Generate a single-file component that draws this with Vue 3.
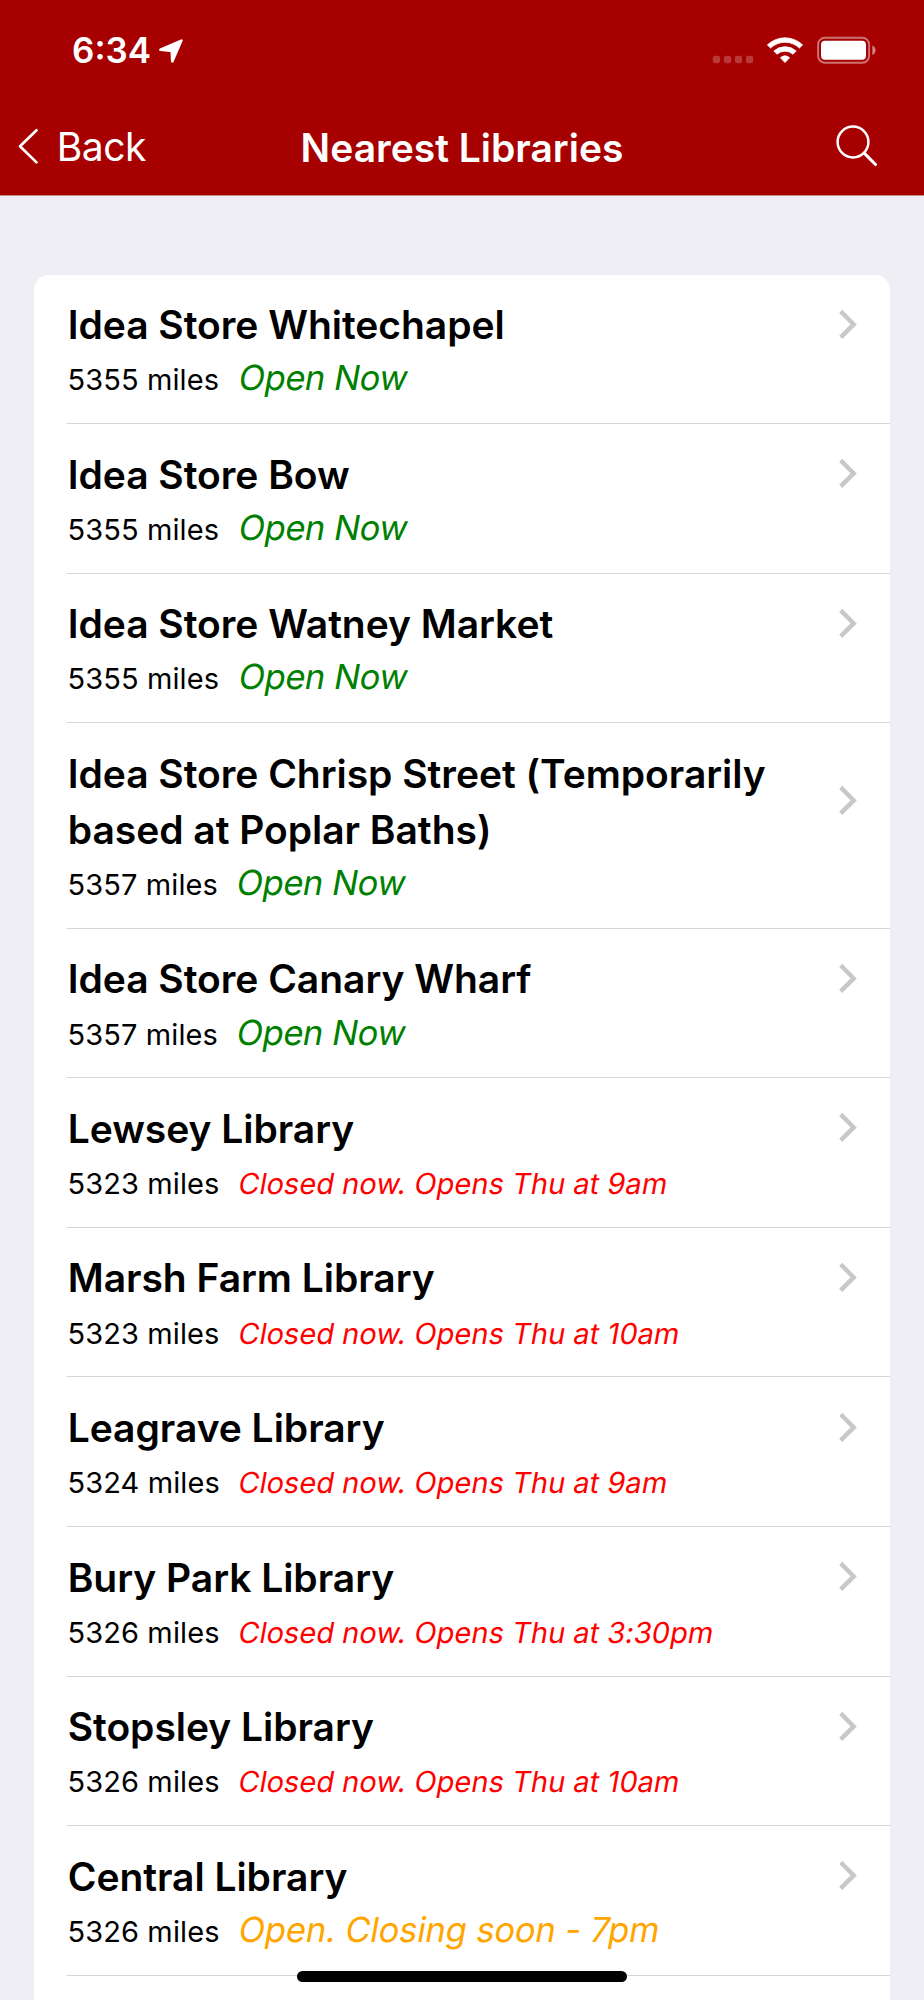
<script setup>
const libraries = [
  { name: 'Idea Store Whitechapel', miles: 5355, state: 'open', status: 'Open Now' },
  { name: 'Idea Store Bow', miles: 5355, state: 'open', status: 'Open Now' },
  { name: 'Idea Store Watney Market', miles: 5355, state: 'open', status: 'Open Now' },
  { name: 'Idea Store Chrisp Street (Temporarily based at Poplar Baths)', miles: 5357, state: 'open', status: 'Open Now' },
  { name: 'Idea Store Canary Wharf', miles: 5357, state: 'open', status: 'Open Now' },
  { name: 'Lewsey Library', miles: 5323, state: 'closed', status: 'Closed now. Opens Thu at 9am' },
  { name: 'Marsh Farm Library', miles: 5323, state: 'closed', status: 'Closed now. Opens Thu at 10am' },
  { name: 'Leagrave Library', miles: 5324, state: 'closed', status: 'Closed now. Opens Thu at 9am' },
  { name: 'Bury Park Library', miles: 5326, state: 'closed', status: 'Closed now. Opens Thu at 3:30pm' },
  { name: 'Stopsley Library', miles: 5326, state: 'closed', status: 'Closed now. Opens Thu at 10am' },
  { name: 'Central Library', miles: 5326, state: 'soon', status: 'Open. Closing soon - 7pm' }
]
</script>

<template>
  <div class="screen">
    <header class="header">
      <div class="statusbar">
        <span class="time">6:34</span>
        <svg class="location" width="26" height="25" viewBox="0 0 26 25">
          <path d="M2.4 10.8 L23.4 1.6 L14.3 22.4 L13.7 11.9 Z" fill="#fff" stroke="#fff" stroke-width="2.6" stroke-linejoin="round" />
        </svg>
        <svg class="indicators" width="166" height="30" viewBox="0 0 166 30">
          <g fill="#fff" fill-opacity=".22">
            <rect x="0.8" y="19.8" width="7.4" height="7.4" rx="2.6" />
            <rect x="11.8" y="19.8" width="7.4" height="7.4" rx="2.6" />
            <rect x="22.8" y="19.8" width="7.4" height="7.4" rx="2.6" />
            <rect x="33.8" y="19.8" width="7.4" height="7.4" rx="2.6" />
          </g>
          <g fill="#fff" stroke="#fff" stroke-width=".8" stroke-linejoin="round">
            <path d="M55.4 8.9 A25.5 25.5 0 0 1 90.6 8.9 L87.4 12 A21 21 0 0 0 58.6 12 Z" />
            <path d="M61.8 15.1 A16.5 16.5 0 0 1 84.2 15.1 L81 18.2 A12 12 0 0 0 65 18.2 Z" />
            <path d="M68.4 21.7 A7.4 7.4 0 0 1 77.6 21.7 L73 26.6 Z" />
          </g>
          <rect x="106.1" y="1.7" width="51" height="25" rx="6.8" fill="none" stroke="#fff" stroke-opacity=".45" stroke-width="1.9" />
          <rect x="109" y="4.8" width="45" height="19" rx="4" fill="#fff" />
          <path d="M160.3 9.6 Q163.6 11 163.6 14.3 Q163.6 17.6 160.3 19 Z" fill="#fff" fill-opacity=".5" />
        </svg>
      </div>
      <nav class="navbar">
        <div class="back">
          <svg width="22" height="38" viewBox="0 0 22 38">
            <path d="M19.5 2.3 L3 18.3 L19.5 34.4" fill="none" stroke="#fff" stroke-width="2.7" stroke-linecap="round" stroke-linejoin="round" />
          </svg>
          <span class="back-label">Back</span>
        </div>
        <h1 class="title">Nearest Libraries</h1>
        <svg class="search" width="44" height="44" viewBox="0 0 44 44">
          <circle cx="19" cy="19" r="15.4" fill="none" stroke="#fff" stroke-width="2.5" />
          <path d="M30.2 30.2 L41.5 41.5" fill="none" stroke="#fff" stroke-width="3.1" stroke-linecap="round" />
        </svg>
      </nav>
    </header>

    <main class="list">
      <article v-for="library in libraries" :key="library.name" class="row">
        <div class="heading">
          <h2 class="name">{{ library.name }}</h2>
          <svg class="chevron" width="20" height="32" viewBox="0 0 20 32">
            <path d="M2.7 2.4 L15.7 15.4 L2.7 28.4" fill="none" stroke="#c7c7cc" stroke-width="4.4" />
          </svg>
        </div>
        <p class="meta"><span class="miles">{{ library.miles }} miles</span><em class="status" :class="library.state">{{ library.status }}</em></p>
      </article>
    </main>
    <div class="home-indicator"></div>
  </div>
</template>

<style>
body {
  margin: 0;
  background: #efeef4;
}
</style>

<style scoped>
.screen {
  position: relative;
  box-sizing: border-box;
  width: 924px;
  height: 2000px;
  overflow: hidden;
  background: #efeef4;
  font-family: Inter, "Liberation Sans", sans-serif;
  color: #000;
}
.header {
  box-sizing: border-box;
  height: 196px;
  border-bottom: 1px solid #c48d91;
  background: #a60000;
  color: #fff;
}
.statusbar {
  display: flex;
  align-items: flex-start;
  box-sizing: border-box;
  height: 100px;
  padding: 27px 46px 0 72px;
}
.time {
  width: 86px;
  font-size: 35px;
  line-height: 46px;
  font-weight: 600;
}
.location {
  margin-top: 11.5px;
}
.indicators {
  margin: 9px 0 0 auto;
}
.navbar {
  display: grid;
  grid-template-columns: 1fr auto 1fr;
  align-items: start;
  padding: 22px 46px 0 17px;
}
.back {
  display: flex;
  align-items: flex-start;
}
.back svg {
  margin-top: 5.5px;
}
.back-label {
  margin-left: 17.8px;
  font-size: 39px;
  line-height: 50px;
  font-weight: 400;
  letter-spacing: -0.5px;
}
.title {
  margin: 1px -29px 0 0;
  font-size: 39px;
  line-height: 50px;
  font-weight: 600;
}
.search {
  justify-self: end;
  margin-top: 1px;
}
.list {
  margin: 78.6px 34px 0 34px;
  border-radius: 15px;
  background: #fff;
  height: 1800px;
  padding-left: 33px;
}
.row {
  box-sizing: border-box;
  padding: 22.6px 0 22.77px;
  border-bottom: 1px solid #d6d6d9;
}
.heading {
  display: flex;
  align-items: center;
}
.name {
  width: 750px;
  margin: 0;
  padding-left: 0.7px;
  font-size: 39px;
  line-height: 56px;
  font-weight: 600;
  letter-spacing: -0.03px;
}
.chevron {
  margin: -1px 0 0 20.7px;
}
.meta {
  height: 44px;
  margin: 3.2px 0 0;
  padding-left: 0.4px;
  font-size: 34.5px;
  line-height: 44px;
  white-space: nowrap;
}
.miles {
  font-size: 29px;
  line-height: 1;
  letter-spacing: 0.12px;
}
/* Slants the upright face so letters keep their roman shapes. */
.status {
  display: inline-block;
  margin-left: 17.4px;
  font-style: normal;
  line-height: 1;
  transform: skewX(-10deg);
  transform-origin: 0 85%;
}
.open {
  color: #008000;
  letter-spacing: -0.45px;
}
.closed {
  color: #f00;
  font-size: 29px;
  letter-spacing: 0.03px;
}
.soon {
  color: #ffa500;
  letter-spacing: -0.15px;
}
.home-indicator {
  position: absolute;
  left: 297px;
  top: 1970.7px;
  width: 330px;
  height: 11px;
  border-radius: 6px;
  background: #000;
}
</style>
